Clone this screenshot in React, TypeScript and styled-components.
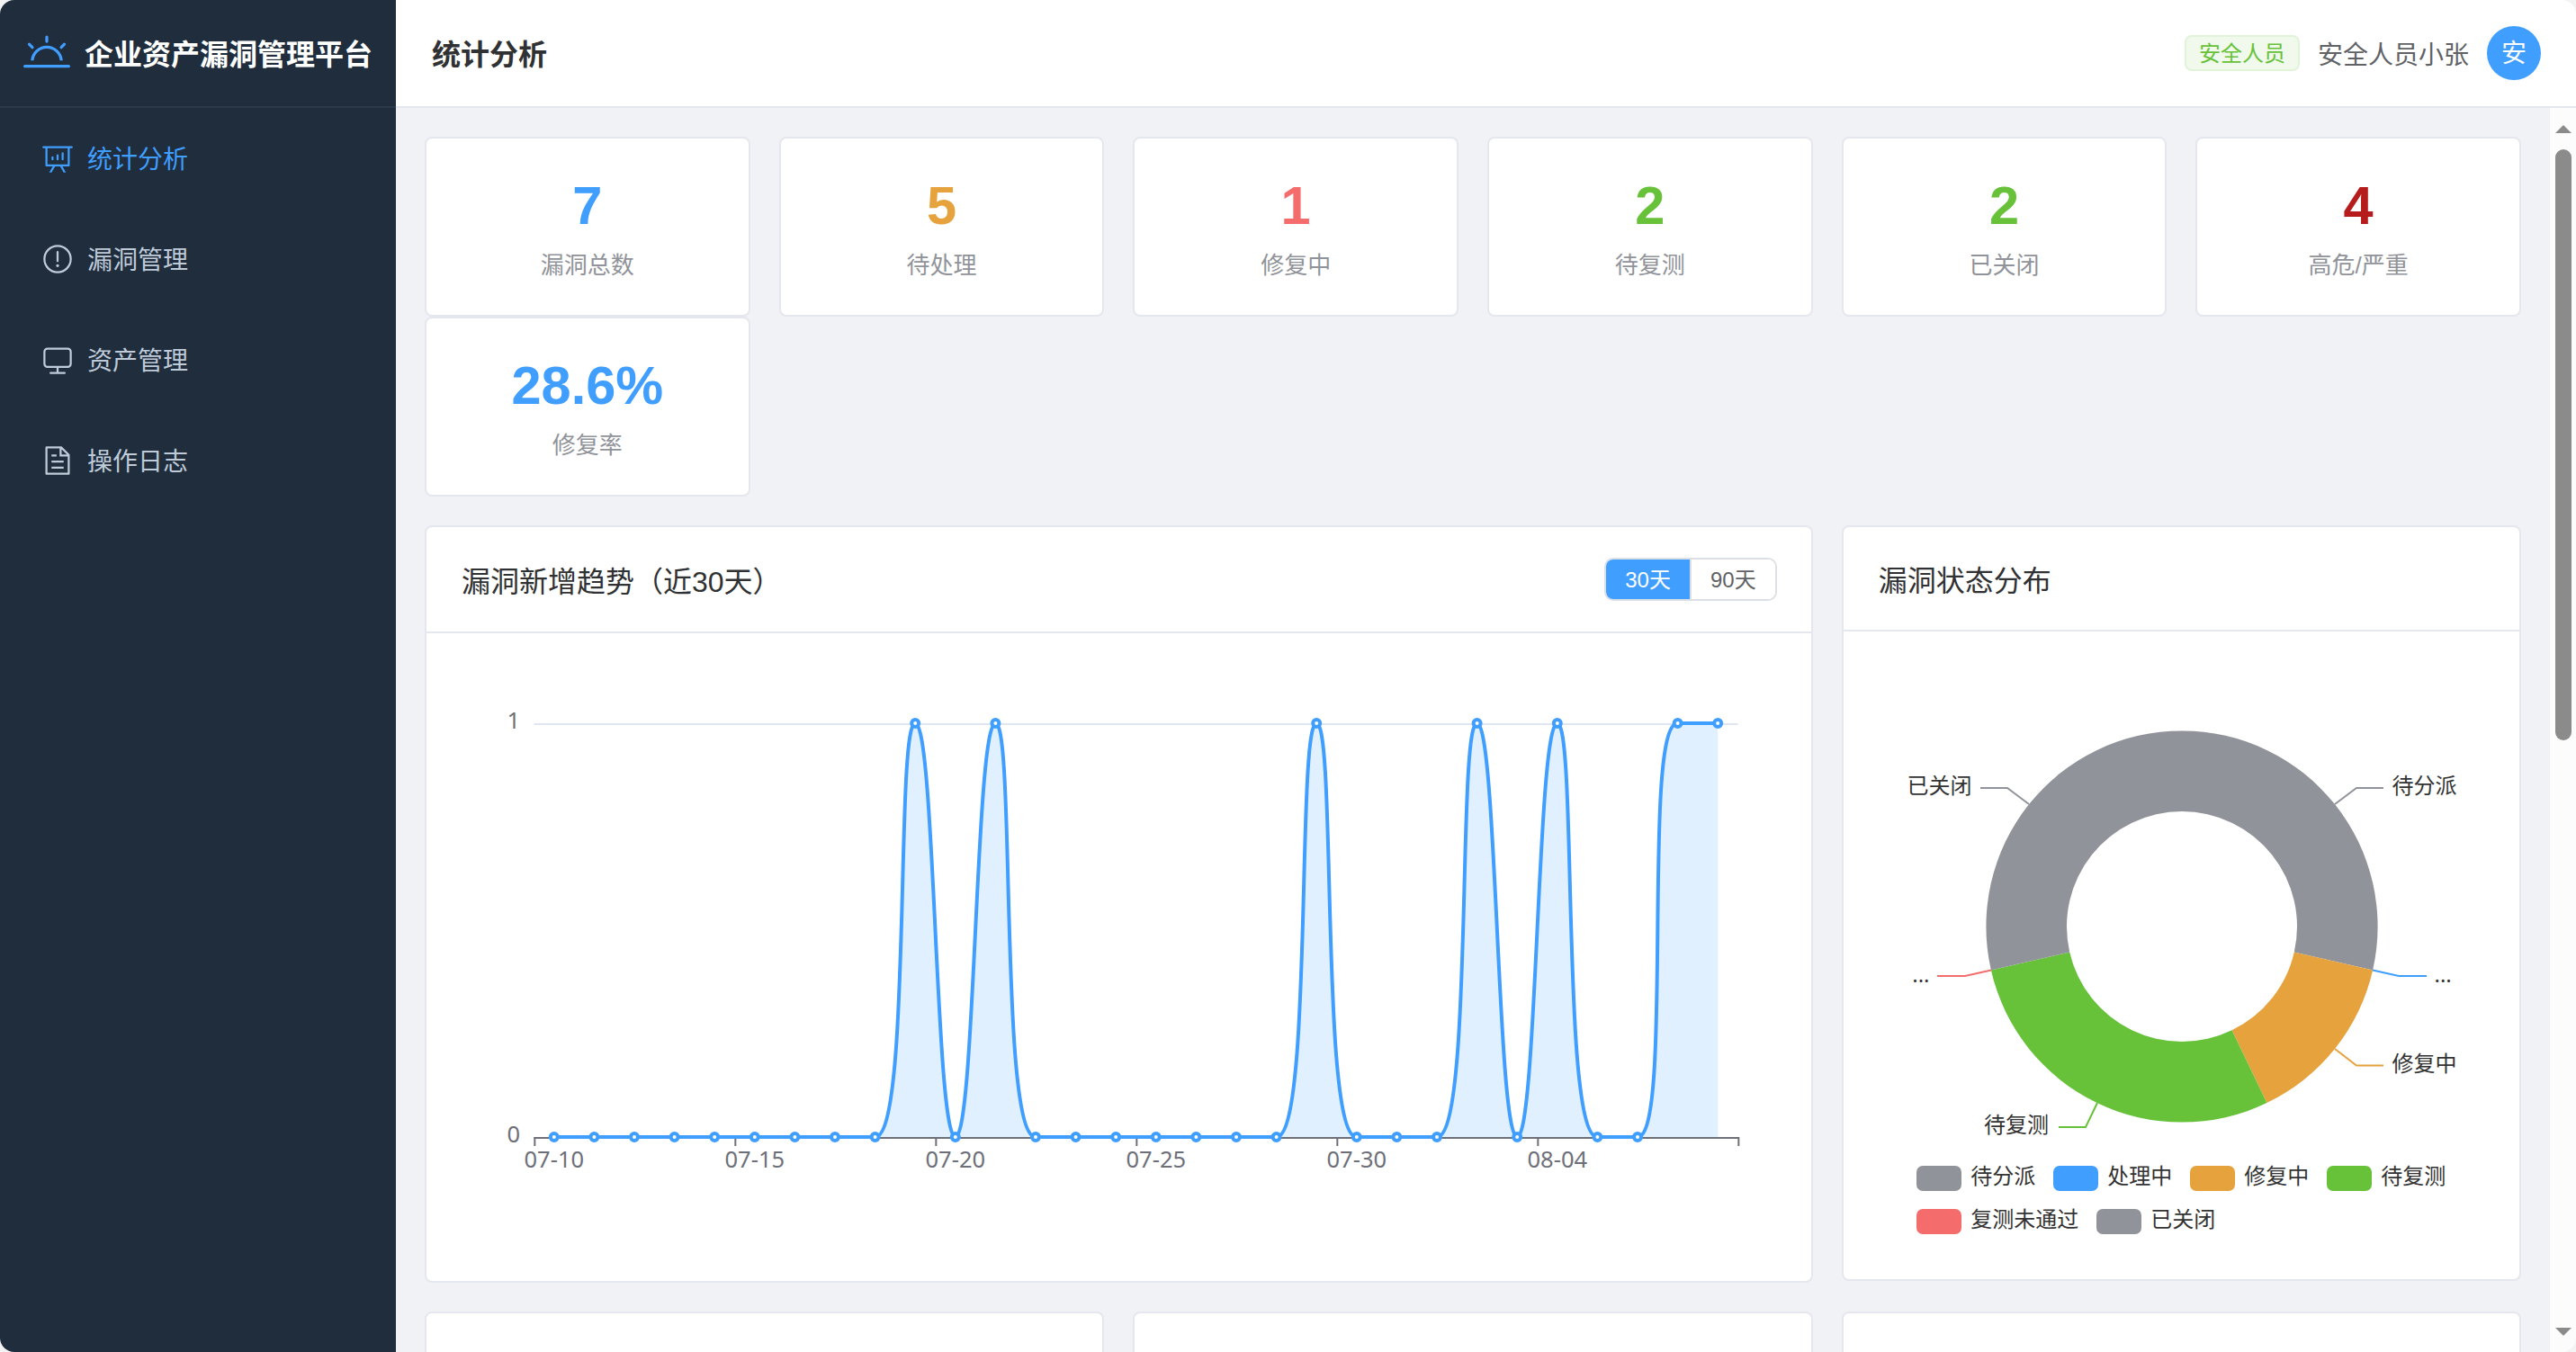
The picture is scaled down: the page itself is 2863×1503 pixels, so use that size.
import React from 'react';
import styled, { createGlobalStyle } from 'styled-components';

const latin = `"Liberation Sans", Arial, "Noto Sans CJK SC", sans-serif`;
const chartFont = `"Noto Sans", "Noto Sans CJK SC", sans-serif`;

const GlobalStyle = createGlobalStyle`
  html, body { margin: 0; padding: 0; background: #f3f3f3; }
  * { box-sizing: border-box; }
  body { font-family: ${latin}; overflow: hidden; }
`;

const Window = styled.div`
  display: flex;
  width: 100vw;
  height: 100vh;
  border-radius: 16px;
  overflow: hidden;
  background: #f0f2f5;
`;

const Sidebar = styled.aside`
  display: flex;
  flex-direction: column;
  flex: 0 0 440px;
  background: #1f2d3d;
`;

const Brand = styled.div`
  display: flex;
  align-items: center;
  justify-content: center;
  gap: 16px;
  height: 120px;
  border-bottom: 2px solid rgba(255, 255, 255, 0.06);
  color: #409eff;
`;

const BrandName = styled.span`
  color: #fff;
  font-size: 32px;
  line-height: 40px;
  font-weight: 700;
  white-space: nowrap;
  padding-top: 3px;
`;

const Menu = styled.nav`
  display: flex;
  flex-direction: column;
`;

const MenuItem = styled.a<{ $active?: boolean }>`
  display: flex;
  align-items: center;
  gap: 9px;
  height: 112px;
  padding: 0 40px;
  font-size: 28px;
  color: ${(p) => (p.$active ? '#409eff' : '#bfcbd9')};
`;

const MenuLabel = styled.span`
  padding-bottom: 3px;
`;

const MenuIcon = styled.span`
  display: flex;
  justify-content: center;
  width: 48px;
`;

const Column = styled.div`
  display: flex;
  flex-direction: column;
  flex: 1;
  min-width: 0;
`;

const TopBar = styled.header`
  display: flex;
  align-items: center;
  justify-content: space-between;
  flex: 0 0 120px;
  padding: 0 39px 0 40px;
  background: #fff;
  border-bottom: 2px solid #e4e7ed;
`;

const PageTitle = styled.h1`
  margin: 0;
  padding-top: 3px;
  font-size: 32px;
  line-height: 40px;
  color: #303133;
`;

const UserArea = styled.div`
  display: flex;
  align-items: center;
  gap: 20px;
`;

const RoleTag = styled.span`
  display: flex;
  align-items: center;
  height: 40px;
  padding: 0 14px 3px;
  border: 2px solid #e1f3d8;
  border-radius: 8px;
  background: #f0f9eb;
  color: #67c23a;
  font-size: 24px;
`;

const UserName = styled.span`
  font-size: 28px;
  line-height: 40px;
  padding-top: 5px;
  color: #606266;
`;

const Avatar = styled.span`
  display: flex;
  align-items: center;
  justify-content: center;
  width: 60px;
  height: 60px;
  padding-bottom: 4px;
  border-radius: 50%;
  background: #409eff;
  color: #fff;
  font-size: 28px;
`;

const Viewport = styled.div`
  display: flex;
  flex: 1;
  min-height: 0;
`;

const Content = styled.main`
  display: flex;
  flex-direction: column;
  gap: 32px;
  flex: 1;
  min-width: 0;
  padding: 32px 32px 0;
  overflow: hidden;
`;

const StatGrid = styled.section`
  display: grid;
  grid-template-columns: repeat(6, 1fr);
  column-gap: 32px;
`;

const Panel = styled.div`
  background: #fff;
  border: 2px solid #e4e7ed;
  border-radius: 8px;
`;

const StatCard = styled(Panel)`
  display: flex;
  flex-direction: column;
  align-items: center;
  height: 200px;
  padding-top: 40px;
`;

const StatValue = styled.strong<{ $color: string }>`
  font-size: 59.5px;
  line-height: 70px;
  color: ${(p) => p.$color};
`;

const StatLabel = styled.span`
  margin-top: 13px;
  font-size: 26px;
  line-height: 36px;
  color: #909399;
`;

const ChartRow = styled.section`
  display: grid;
  grid-template-columns: minmax(0, 1542.67fr) minmax(0, 755.33fr);
  align-items: start;
  column-gap: 32px;
`;

const BottomRow = styled.section`
  display: grid;
  grid-template-columns: repeat(3, 1fr);
  column-gap: 32px;
`;

const BottomCard = styled(Panel)`
  height: 400px;
`;

const PanelHead = styled.div<{ $height: number }>`
  display: flex;
  align-items: center;
  justify-content: space-between;
  height: ${(p) => p.$height}px;
  padding: 0 38px 0 39px;
  border-bottom: 2px solid #e4e7ed;
  color: #303133;
  font-size: 32px;
`;

const PanelBody = styled.div`
  display: flex;
  flex-direction: column;
  height: 720px;
  padding: 40px;
`;

const Segmented = styled.div`
  display: flex;
  height: 48px;
  border: 2px solid #dcdfe6;
  border-radius: 10px;
  overflow: hidden;
`;

const Segment = styled.button<{ $active?: boolean }>`
  display: flex;
  align-items: center;
  padding: 0 21px 3px;
  border: 0;
  font-family: inherit;
  font-size: 24px;
  background: ${(p) => (p.$active ? '#409eff' : '#fff')};
  color: ${(p) => (p.$active ? '#fff' : '#606266')};
  & + & { border-left: 2px solid #dcdfe6; }
`;

const ChartSvg = styled.svg`
  display: block;
  flex: none;
  overflow: visible;
  font-family: ${chartFont};
`;

const Legend = styled.div`
  display: flex;
  flex-wrap: wrap;
  gap: 20px;
  width: 588px;
  margin: 0 auto;
`;

const LegendItem = styled.span`
  display: flex;
  align-items: center;
  gap: 10px;
  height: 28px;
  font-size: 24px;
  line-height: 28px;
  color: #333;
`;

const LegendText = styled.span`
  margin-top: -4px;
`;

const Swatch = styled.i<{ $color: string }>`
  width: 50px;
  height: 28px;
  border-radius: 7px;
  background: ${(p) => p.$color};
`;

const Scrollbar = styled.div`
  display: flex;
  flex-direction: column;
  align-items: center;
  flex: 0 0 29px;
  padding: 19px 0 18px;
  background: #fcfcfc;
`;

const Arrow = styled.i<{ $down?: boolean }>`
  border: 9px solid transparent;
  border-top: ${(p) => (p.$down ? '9px solid #8b8b8b' : '0')};
  border-bottom: ${(p) => (p.$down ? '0' : '9px solid #8b8b8b')};
`;

const Thumb = styled.div`
  width: 18px;
  height: 657px;
  margin: 18px 0 auto;
  border-radius: 9px;
  background: #8b8b8b;
`;

const icons = {
  sunrise:
    'M32 768h960a32 32 0 1 1 0 64H32a32 32 0 1 1 0-64zm129.408-96a352 352 0 0 1 701.184 0h-64.32a288 288 0 0 0-572.544 0h-64.32zM512 128a32 32 0 0 1 32 32v96a32 32 0 0 1-64 0v-96a32 32 0 0 1 32-32zm407.296 168.704a32 32 0 0 1 0 45.248l-67.84 67.84a32 32 0 1 1-45.248-45.248l67.84-67.84a32 32 0 0 1 45.248 0zm-814.592 0a32 32 0 0 1 45.248 0l67.84 67.84a32 32 0 1 1-45.248 45.248l-67.84-67.84a32 32 0 0 1 0-45.248z',
  analysis:
    'm665.216 768 110.848 192h-73.856L591.36 768H433.024L322.176 960H248.32l110.848-192H160a32 32 0 0 1-32-32V192H64a32 32 0 0 1 0-64h896a32 32 0 1 1 0 64h-64v544a32 32 0 0 1-32 32H665.216zM832 192H192v512h640V192zM352 448a32 32 0 0 1 32 32v64a32 32 0 0 1-64 0v-64a32 32 0 0 1 32-32zm160-64a32 32 0 0 1 32 32v128a32 32 0 0 1-64 0V416a32 32 0 0 1 32-32zm160-64a32 32 0 0 1 32 32v192a32 32 0 1 1-64 0V352a32 32 0 0 1 32-32z',
  warning:
    'M512 64a448 448 0 1 1 0 896 448 448 0 0 1 0-896zm0 832a384 384 0 0 0 0-768 384 384 0 0 0 0 768zm48-176a48 48 0 1 1-96 0 48 48 0 0 1 96 0zm-48-464a32 32 0 0 1 32 32v288a32 32 0 0 1-64 0V288a32 32 0 0 1 32-32z',
  monitor:
    'M544 768v128h192a32 32 0 1 1 0 64H288a32 32 0 1 1 0-64h192V768H192A128 128 0 0 1 64 640V256a128 128 0 0 1 128-128h640a128 128 0 0 1 128 128v384a128 128 0 0 1-128 128H544zM192 192a64 64 0 0 0-64 64v384a64 64 0 0 0 64 64h640a64 64 0 0 0 64-64V256a64 64 0 0 0-64-64H192z',
  document:
    'M832 384H576V128H192v768h640V384zm-26.496-64L640 154.496V320h165.504zM160 64h480l256 256v608a32 32 0 0 1-32 32H160a32 32 0 0 1-32-32V96a32 32 0 0 1 32-32zm160 448h384v64H320v-64zm0-192h160v64H320v-64zm0 384h384v64H320v-64z',
};

function Icon({ name, size }: { name: keyof typeof icons; size: number }) {
  return (
    <svg width={size} height={size} viewBox="0 0 1024 1024" fill="currentColor">
      <path d={icons[name]} />
    </svg>
  );
}

const menu: { icon: keyof typeof icons; label: string }[] = [
  { icon: 'analysis', label: '统计分析' },
  { icon: 'warning', label: '漏洞管理' },
  { icon: 'monitor', label: '资产管理' },
  { icon: 'document', label: '操作日志' },
];

const stats = [
  { value: '7', label: '漏洞总数', color: '#409eff' },
  { value: '5', label: '待处理', color: '#e6a23c' },
  { value: '1', label: '修复中', color: '#f56c6c' },
  { value: '2', label: '待复测', color: '#67c23a' },
  { value: '2', label: '已关闭', color: '#67c23a' },
  { value: '4', label: '高危/严重', color: '#b71c1c' },
  { value: '28.6%', label: '修复率', color: '#409eff' },
];

type Point = [number, number];
const clamp = (v: number, a: number, b: number) =>
  Math.max(Math.min(v, Math.max(a, b)), Math.min(a, b));

/** Smoothed line whose control points never leave the span of their segment. */
function smoothPath(pts: Point[], smooth = 0.5) {
  let d = `M${pts[0][0]} ${pts[0][1]}`;
  let c0: Point = pts[0];
  for (let i = 1; i < pts.length; i++) {
    const [px, py] = pts[i - 1];
    const [x, y] = pts[i];
    let c1: Point = [x, y];
    let next: Point = [x, y];
    if (i < pts.length - 1) {
      const [nx, ny] = pts[i + 1];
      const lenPrev = Math.hypot(x - px, y - py);
      const lenNext = Math.hypot(nx - x, ny - y);
      const ratio = lenNext / (lenNext + lenPrev);
      const n0x = clamp(x + (nx - px) * smooth * ratio, nx, x);
      const n0y = clamp(y + (ny - py) * smooth * ratio, ny, y);
      c1 = [
        clamp(x - ((n0x - x) * lenPrev) / lenNext, px, x),
        clamp(y - ((n0y - y) * lenPrev) / lenNext, py, y),
      ];
      next = [x + ((x - c1[0]) * lenNext) / lenPrev, y + ((y - c1[1]) * lenNext) / lenPrev];
    }
    d += `C${c0[0]} ${c0[1]} ${c1[0]} ${c1[1]} ${x} ${y}`;
    c0 = next;
  }
  return d;
}

const peaks = [9, 11, 19, 23, 25, 28, 29];
const daily = Array.from({ length: 30 }, (_, i) => (peaks.includes(i) ? 1 : 0));
const dayLabels = ['07-10', '07-15', '07-20', '07-25', '07-30', '08-04'];

function TrendChart() {
  const left = 79.5;
  const right = 1417.5;
  const top = 60;
  const base = 520;
  const step = (right - left) / daily.length;
  const pts = daily.map((v, i): Point => [left + step * (i + 0.5), base - v * (base - top)]);
  const line = smoothPath(pts);
  return (
    <ChartSvg width={1458} height={640}>
      <line x1={left} x2={right} y1={top + 1} y2={top + 1} stroke="#e0e6f1" strokeWidth={2} />
      <path d={`${line}L${pts[29][0]} ${base}L${pts[0][0]} ${base}Z`} fill="#409eff" fillOpacity={0.155} />
      <line x1={left} x2={right + 1} y1={base + 1} y2={base + 1} stroke="#6e7079" strokeWidth={2} />
      {[0, 5, 10, 15, 20, 25, 30].map((i) => {
        const x = Math.floor(left + step * i) + 1.33;
        return <line key={i} x1={x} x2={x} y1={base} y2={base + 10} stroke="#6e7079" strokeWidth={2} />;
      })}
      <path d={line} fill="none" stroke="#409eff" strokeWidth={4} strokeLinejoin="bevel" />
      {pts.map(([x, y], i) => (
        <circle key={i} cx={x} cy={y} r={4} fill="#fff" stroke="#409eff" strokeWidth={4} />
      ))}
      <g fill="#6e7079" fontSize={25.5}>
        <text x={64} y={66} textAnchor="end">1</text>
        <text x={64} y={526} textAnchor="end">0</text>
        {dayLabels.map((t, i) => (
          <text key={t} x={pts[i * 5][0]} y={554} textAnchor="middle">{t}</text>
        ))}
      </g>
    </ChartSvg>
  );
}

const slices = [
  { name: '待分派', value: 2, color: '#909399' },
  { name: '处理中', value: 0, color: '#409eff' },
  { name: '修复中', value: 1, color: '#e6a23c' },
  { name: '待复测', value: 2, color: '#67c23a' },
  { name: '复测未通过', value: 0, color: '#f56c6c' },
  { name: '已关闭', value: 2, color: '#909399' },
];

const callouts: { text: string; color: string; points: string; x: number; y: number; end?: boolean }[] = [
  { text: '待分派', color: '#909399', points: '170,-136 194,-154 224,-154', x: 233.5, y: -148 },
  { text: '...', color: '#409eff', points: '212,48.5 241,55 272,55', x: 280.5, y: 62 },
  { text: '修复中', color: '#e6a23c', points: '170,136 194,154.5 224,154.5', x: 233.5, y: 161 },
  { text: '待复测', color: '#67c23a', points: '-94,196 -107,223 -137,223', x: -148, y: 229, end: true },
  { text: '...', color: '#f56c6c', points: '-212,48.5 -241,55 -272,55', x: -280.5, y: 62, end: true },
  { text: '已关闭', color: '#909399', points: '-170,-136 -194,-154 -224,-154', x: -233.5, y: -148, end: true },
];

function ringPath(from: number, to: number, outer: number, inner: number) {
  const at = (t: number, r: number) => {
    const a = t * Math.PI * 2;
    return `${r * Math.sin(a)} ${-r * Math.cos(a)}`;
  };
  return `M${at(from, outer)}A${outer} ${outer} 0 0 1 ${at(to, outer)}L${at(to, inner)}A${inner} ${inner} 0 0 0 ${at(from, inner)}Z`;
}

function StatusChart() {
  const total = slices.reduce((s, x) => s + x.value, 0);
  let acc = 0;
  return (
    <ChartSvg width={671} height={554}>
      <g transform="translate(336 288)">
        {slices.map((s) => {
          const from = acc / total;
          acc += s.value;
          return s.value ? (
            <path key={s.name} d={ringPath(from, acc / total, 217.6, 128)} fill={s.color} />
          ) : null;
        })}
        {callouts.map((c, i) => (
          <g key={i}>
            <polyline points={c.points} fill="none" stroke={c.color} strokeWidth={2} />
            <text x={c.x} y={c.y} fontSize={24} fill="#333" textAnchor={c.end ? 'end' : 'start'}>
              {c.text}
            </text>
          </g>
        ))}
      </g>
    </ChartSvg>
  );
}

export default function App() {
  return (
    <>
      <GlobalStyle />
      <Window>
        <Sidebar>
          <Brand>
            <Icon name="sunrise" size={52} />
            <BrandName>企业资产漏洞管理平台</BrandName>
          </Brand>
          <Menu>
            {menu.map((m, i) => (
              <MenuItem key={m.label} $active={i === 0}>
                <MenuIcon>
                  <Icon name={m.icon} size={36} />
                </MenuIcon>
                <MenuLabel>{m.label}</MenuLabel>
              </MenuItem>
            ))}
          </Menu>
        </Sidebar>
        <Column>
          <TopBar>
            <PageTitle>统计分析</PageTitle>
            <UserArea>
              <RoleTag>安全人员</RoleTag>
              <UserName>安全人员小张</UserName>
              <Avatar>安</Avatar>
            </UserArea>
          </TopBar>
          <Viewport>
            <Content>
              <StatGrid>
                {stats.map((s) => (
                  <StatCard key={s.label}>
                    <StatValue $color={s.color}>{s.value}</StatValue>
                    <StatLabel>{s.label}</StatLabel>
                  </StatCard>
                ))}
              </StatGrid>
              <ChartRow>
                <Panel>
                  <PanelHead $height={118}>
                    <span>漏洞新增趋势（近30天）</span>
                    <Segmented>
                      <Segment $active>30天</Segment>
                      <Segment>90天</Segment>
                    </Segmented>
                  </PanelHead>
                  <PanelBody>
                    <TrendChart />
                  </PanelBody>
                </Panel>
                <Panel>
                  <PanelHead $height={116}>
                    <span>漏洞状态分布</span>
                  </PanelHead>
                  <PanelBody>
                    <StatusChart />
                    <Legend>
                      {slices.map((s) => (
                        <LegendItem key={s.name}>
                          <Swatch $color={s.color} />
                          <LegendText>{s.name}</LegendText>
                        </LegendItem>
                      ))}
                    </Legend>
                  </PanelBody>
                </Panel>
              </ChartRow>
              <BottomRow>
                <BottomCard />
                <BottomCard />
                <BottomCard />
              </BottomRow>
            </Content>
            <Scrollbar>
              <Arrow />
              <Thumb />
              <Arrow $down />
            </Scrollbar>
          </Viewport>
        </Column>
      </Window>
    </>
  );
}
